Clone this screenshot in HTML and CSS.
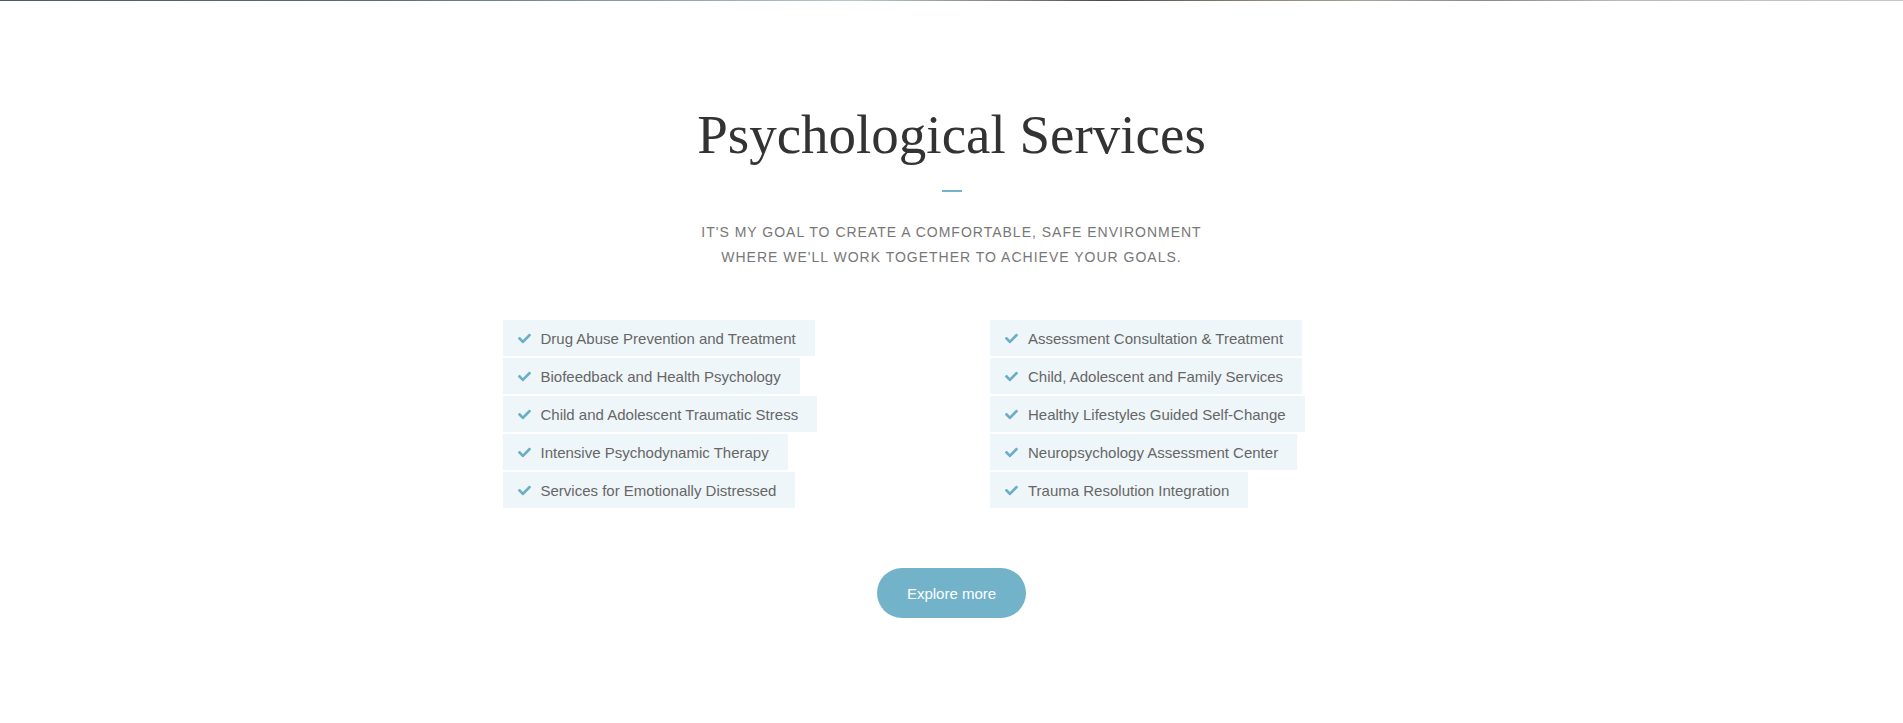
FILE: index.html
```html
<!DOCTYPE html>
<html lang="en">
<head>
<meta charset="utf-8">
<title>Psychological Services</title>
<link rel="stylesheet" href="styles.css">
</head>
<body>
<div class="top-strip"></div>
<section class="services">
  <h1 class="services-title">Psychological Services</h1>
  <div class="divider"></div>
  <p class="services-lead">It's my goal to create a comfortable, safe environment<br>where we'll work together to achieve your goals.</p>
  <div class="services-grid">
    <ul class="service-list">
      <li class="service-item"><svg class="check" viewBox="0 0 512 512"><path d="M173.898 439.404l-166.4-166.4c-9.997-9.997-9.997-26.206 0-36.204l36.203-36.204c9.997-9.998 26.207-9.998 36.204 0L192 312.69 432.095 72.596c9.997-9.997 26.207-9.997 36.204 0l36.203 36.204c9.997 9.997 9.997 26.206 0 36.204l-294.4 294.401c-9.998 9.997-26.207 9.997-36.204-.001z"/></svg>Drug Abuse Prevention and Treatment</li>
      <li class="service-item"><svg class="check" viewBox="0 0 512 512"><path d="M173.898 439.404l-166.4-166.4c-9.997-9.997-9.997-26.206 0-36.204l36.203-36.204c9.997-9.998 26.207-9.998 36.204 0L192 312.69 432.095 72.596c9.997-9.997 26.207-9.997 36.204 0l36.203 36.204c9.997 9.997 9.997 26.206 0 36.204l-294.4 294.401c-9.998 9.997-26.207 9.997-36.204-.001z"/></svg>Biofeedback and Health Psychology</li>
      <li class="service-item"><svg class="check" viewBox="0 0 512 512"><path d="M173.898 439.404l-166.4-166.4c-9.997-9.997-9.997-26.206 0-36.204l36.203-36.204c9.997-9.998 26.207-9.998 36.204 0L192 312.69 432.095 72.596c9.997-9.997 26.207-9.997 36.204 0l36.203 36.204c9.997 9.997 9.997 26.206 0 36.204l-294.4 294.401c-9.998 9.997-26.207 9.997-36.204-.001z"/></svg>Child and Adolescent Traumatic Stress</li>
      <li class="service-item"><svg class="check" viewBox="0 0 512 512"><path d="M173.898 439.404l-166.4-166.4c-9.997-9.997-9.997-26.206 0-36.204l36.203-36.204c9.997-9.998 26.207-9.998 36.204 0L192 312.69 432.095 72.596c9.997-9.997 26.207-9.997 36.204 0l36.203 36.204c9.997 9.997 9.997 26.206 0 36.204l-294.4 294.401c-9.998 9.997-26.207 9.997-36.204-.001z"/></svg>Intensive Psychodynamic Therapy</li>
      <li class="service-item"><svg class="check" viewBox="0 0 512 512"><path d="M173.898 439.404l-166.4-166.4c-9.997-9.997-9.997-26.206 0-36.204l36.203-36.204c9.997-9.998 26.207-9.998 36.204 0L192 312.69 432.095 72.596c9.997-9.997 26.207-9.997 36.204 0l36.203 36.204c9.997 9.997 9.997 26.206 0 36.204l-294.4 294.401c-9.998 9.997-26.207 9.997-36.204-.001z"/></svg>Services for Emotionally Distressed</li>
    </ul>
    <ul class="service-list">
      <li class="service-item"><svg class="check" viewBox="0 0 512 512"><path d="M173.898 439.404l-166.4-166.4c-9.997-9.997-9.997-26.206 0-36.204l36.203-36.204c9.997-9.998 26.207-9.998 36.204 0L192 312.69 432.095 72.596c9.997-9.997 26.207-9.997 36.204 0l36.203 36.204c9.997 9.997 9.997 26.206 0 36.204l-294.4 294.401c-9.998 9.997-26.207 9.997-36.204-.001z"/></svg>Assessment Consultation &amp; Treatment</li>
      <li class="service-item"><svg class="check" viewBox="0 0 512 512"><path d="M173.898 439.404l-166.4-166.4c-9.997-9.997-9.997-26.206 0-36.204l36.203-36.204c9.997-9.998 26.207-9.998 36.204 0L192 312.69 432.095 72.596c9.997-9.997 26.207-9.997 36.204 0l36.203 36.204c9.997 9.997 9.997 26.206 0 36.204l-294.4 294.401c-9.998 9.997-26.207 9.997-36.204-.001z"/></svg>Child, Adolescent and Family Services</li>
      <li class="service-item"><svg class="check" viewBox="0 0 512 512"><path d="M173.898 439.404l-166.4-166.4c-9.997-9.997-9.997-26.206 0-36.204l36.203-36.204c9.997-9.998 26.207-9.998 36.204 0L192 312.69 432.095 72.596c9.997-9.997 26.207-9.997 36.204 0l36.203 36.204c9.997 9.997 9.997 26.206 0 36.204l-294.4 294.401c-9.998 9.997-26.207 9.997-36.204-.001z"/></svg>Healthy Lifestyles Guided Self-Change</li>
      <li class="service-item"><svg class="check" viewBox="0 0 512 512"><path d="M173.898 439.404l-166.4-166.4c-9.997-9.997-9.997-26.206 0-36.204l36.203-36.204c9.997-9.998 26.207-9.998 36.204 0L192 312.69 432.095 72.596c9.997-9.997 26.207-9.997 36.204 0l36.203 36.204c9.997 9.997 9.997 26.206 0 36.204l-294.4 294.401c-9.998 9.997-26.207 9.997-36.204-.001z"/></svg>Neuropsychology Assessment Center</li>
      <li class="service-item"><svg class="check" viewBox="0 0 512 512"><path d="M173.898 439.404l-166.4-166.4c-9.997-9.997-9.997-26.206 0-36.204l36.203-36.204c9.997-9.998 26.207-9.998 36.204 0L192 312.69 432.095 72.596c9.997-9.997 26.207-9.997 36.204 0l36.203 36.204c9.997 9.997 9.997 26.206 0 36.204l-294.4 294.401c-9.998 9.997-26.207 9.997-36.204-.001z"/></svg>Trauma Resolution Integration</li>
    </ul>
  </div>
  <div class="actions">
    <a class="btn-explore" href="#">Explore more</a>
  </div>
</section>
</body>
</html>
```

FILE: styles.css
```css
html, body {
  margin: 0;
  padding: 0;
  background: #fff;
}

body {
  font-family: "Liberation Sans", Arial, sans-serif;
  color: #666;
}

.top-strip {
  height: 1px;
  background: linear-gradient(90deg, #4b5a6c 0%, #5c6d7c 20%, #8fa3ad 35%, #b9c9cc 45%, #6d6e6c 55%, #4a4a48 58%, #8d8676 66%, #a7a39a 72%, #8a8a88 78%, #b9b9b7 85%, #c9c9c9 100%);
}

.services {
  padding: 100px 0 100px;
  text-align: center;
}

.services-title {
  margin: 0;
  font-family: "Liberation Serif", "Times New Roman", serif;
  font-weight: 400;
  font-size: 55px;
  line-height: 68px;
  color: #333;
}

.divider {
  width: 20px;
  height: 2px;
  margin: 21px auto 0;
  background: #72b3c9;
}

.services-lead {
  margin: 28px 0 0;
  font-size: 14px;
  line-height: 25px;
  letter-spacing: 1px;
  text-transform: uppercase;
  color: #777;
}

.services-grid {
  display: grid;
  grid-template-columns: 487.5px 487.5px;
  justify-content: center;
  margin-top: 50px;
}

.service-list {
  list-style: none;
  margin: 0;
  padding: 0 0 0 38.5px;
  display: flex;
  flex-direction: column;
  align-items: flex-start;
  gap: 2px;
}

.service-item {
  display: flex;
  align-items: center;
  height: 36px;
  padding: 0 19px 0 15px;
  background: #eff6f9;
  font-size: 15px;
  color: #666;
  text-align: left;
}

.check {
  width: 13px;
  height: 13px;
  margin-right: 10px;
  fill: #6aafc6;
  flex: none;
}

.actions {
  margin-top: 60px;
}

.btn-explore {
  display: inline-flex;
  align-items: center;
  justify-content: center;
  width: 149px;
  height: 50px;
  border-radius: 25px;
  background: #72b3c9;
  color: #fff;
  font-size: 15px;
  text-decoration: none;
}
```
